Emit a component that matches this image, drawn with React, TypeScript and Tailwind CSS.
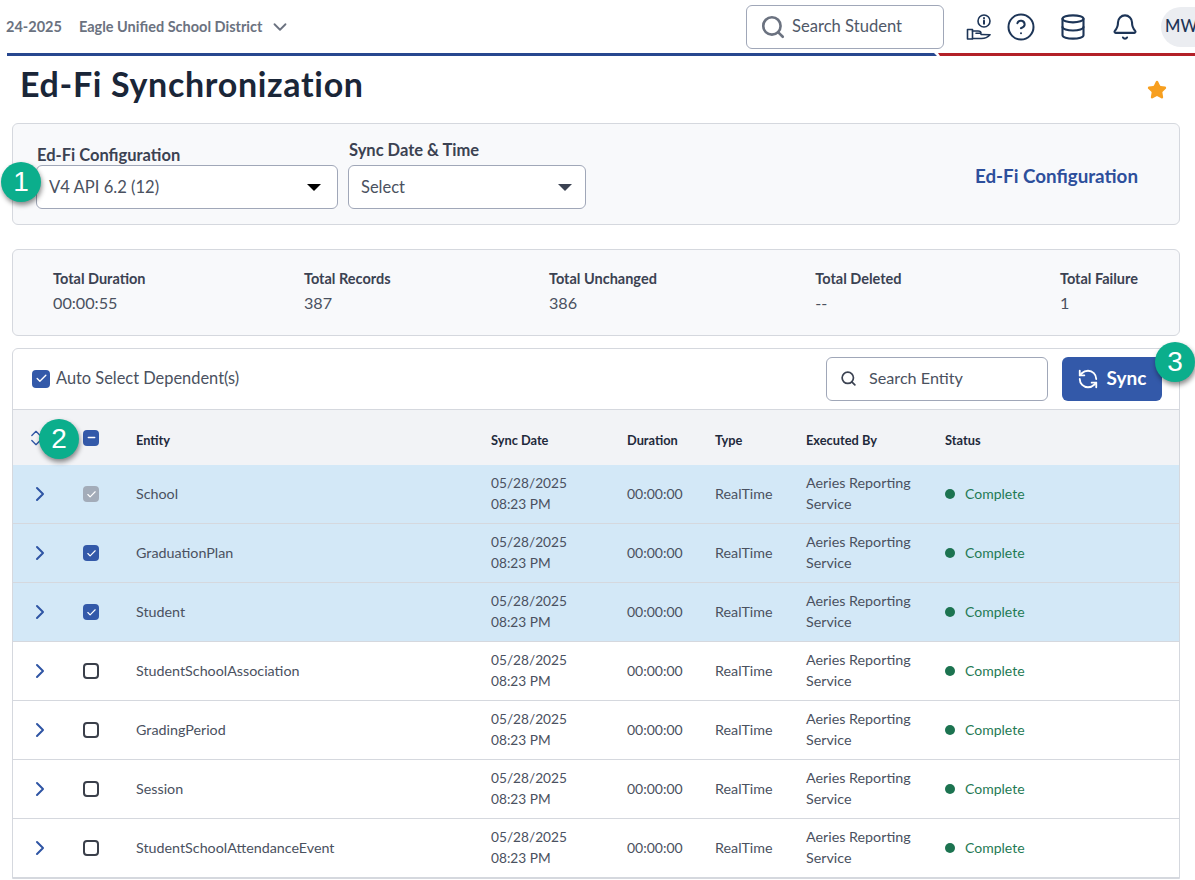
import { Bell, ChevronDown, ChevronRight, ChevronsUpDown, CircleHelp, Database, RefreshCcw, Search, Star, Check, Minus } from 'lucide-react';

const rows = [
  { name: 'School', state: 'locked' },
  { name: 'GraduationPlan', state: 'checked' },
  { name: 'Student', state: 'checked' },
  { name: 'StudentSchoolAssociation', state: 'none' },
  { name: 'GradingPeriod', state: 'none' },
  { name: 'Session', state: 'none' },
  { name: 'StudentSchoolAttendanceEvent', state: 'none' },
];

const totals = [
  { label: 'Total Duration', value: '00:00:55' },
  { label: 'Total Records', value: '387' },
  { label: 'Total Unchanged', value: '386' },
  { label: 'Total Deleted', value: '--' },
  { label: 'Total Failure', value: '1' },
];

function StepBadge({ n, className }: { n: number; className: string }) {
  return (
    <div
      className={`absolute flex h-10 w-10 items-center justify-center rounded-full bg-[#0bae8c] text-[28px] leading-none text-white shadow-[1px_3px_5px_rgba(0,0,0,0.45)] ${className}`}
      style={{ fontFamily: '"Liberation Sans", sans-serif' }}
    >
      {n}
    </div>
  );
}

function HandInfoIcon() {
  return (
    <svg width="26" height="28" viewBox="0 0 26 28" fill="none" stroke="#1d3557" strokeWidth="1.6" strokeLinecap="round" strokeLinejoin="round">
      <circle cx="18" cy="8" r="6" />
      <path d="M18 7.500v3.200" strokeWidth="2" />
      <path d="M18 5v.2" strokeWidth="2" />
      <rect x="1.500" y="16.500" width="5" height="9.500" />
      <path d="M6.500 18h5.500c1.500 0 3 .8 3 2.200h-5" />
      <path d="M6.500 25.500h9c3 0 6.500-1.500 8.500-3.800l-9-.2" />
    </svg>
  );
}

function Checkbox({ state }: { state: string }) {
  if (state === 'none') {
    return <div className="h-4 w-4 rounded-[4px] border-2 border-[#3a3f4a] bg-white" />;
  }
  return (
    <div className={`flex h-4 w-4 items-center justify-center rounded-[4px] ${state === 'locked' ? 'bg-[#a3acb9]' : 'bg-[#3359a9]'}`}>
      {state === 'minus' ? <Minus size={11} strokeWidth={3} color="white" /> : <Check size={11} strokeWidth={2.5} color="white" />}
    </div>
  );
}

function Row({ name, state }: { name: string; state: string }) {
  const selected = state !== 'none';
  return (
    <div className={`flex h-[59px] items-center border-b border-[#d5d8de] pl-[15px] text-[14.3px] text-[#4a5160] ${selected ? 'bg-[#d3e8f7]' : 'bg-white'}`}>
      <div className="w-[55px]">
        <ChevronRight size={24} strokeWidth={2} color="#2f55a4" />
      </div>
      <div className="w-[53px]">
        <Checkbox state={state} />
      </div>
      <div className="w-[355px]">{name}</div>
      <div className="w-[136px] pb-[2px] text-[13.7px] leading-[21px]">
        05/28/2025
        <br />
        08:23 PM
      </div>
      <div className="w-[88px] pb-[2px] text-[14px]">00:00:00</div>
      <div className="w-[91px]">RealTime</div>
      <div className="w-[139px] pb-[2px] leading-[21px]">
        Aeries Reporting
        <br />
        Service
      </div>
      <div className="flex items-center gap-[10px] text-[14px] text-[#1f7a54]">
        <span className="h-[10px] w-[10px] rounded-full bg-[#1c7350]" />
        <span className="-mt-[2px]">Complete</span>
      </div>
    </div>
  );
}

export default function App() {
  return (
    <div className="h-[880px] w-[1195px] overflow-hidden bg-white text-[#1f2a3c]" style={{ fontFamily: 'Lato, "Noto Sans", sans-serif' }}>
      <header className="flex h-[53px] items-center pl-[6px]">
        <span className="text-[14.5px] font-bold text-[#6b7280]">24-2025</span>
        <span className="ml-[17px] text-[14.5px] font-bold text-[#6b7280]">Eagle Unified School District</span>
        <ChevronDown size={22} className="ml-[7px] text-[#6b7280]" />
        <div className="ml-auto flex h-[44px] w-[198px] items-center gap-[6px] rounded-md border border-[#a0a7b8] pl-[13px] text-[16.6px] text-[#505868]">
          <Search size={26} strokeWidth={2.4} color="#6b7280" />
          Search Student
        </div>
        <div className="ml-[22px]">
          <HandInfoIcon />
        </div>
        <CircleHelp size={30} strokeWidth={1.6} color="#1d3557" className="ml-[14px]" />
        <Database size={28} strokeWidth={1.8} color="#1d3557" className="ml-[23px]" />
        <Bell size={28} strokeWidth={1.8} color="#1d3557" className="ml-[24px]" />
        <div className="ml-[22px] flex h-10 w-[34px] shrink-0 items-center overflow-hidden rounded-l-full bg-[#ebedf1] pl-[4px] text-[16.5px] font-medium text-[#1d3557]">MW</div>
      </header>
      <div className="flex h-[3px] pl-[7px]">
        <div className="w-[930px] bg-[#27478f] [clip-path:polygon(0_0,calc(100%-3px)_0,100%_100%,0_100%)]" />
        <div className="ml-[1px] flex-1 bg-[#b32028] [clip-path:polygon(0_0,100%_0,100%_100%,2px_100%)]" />
      </div>
      <div className="flex h-[67px] items-center justify-between pb-3 pl-[20px] pr-[28px]">
        <h1 className="text-[34px] font-bold leading-none tracking-[0.67px] text-[#1a2638]">Ed-Fi Synchronization</h1>
        <Star size={20} fill="#f79f1f" color="#f79f1f" className="mt-3" />
      </div>
      <section className="relative mx-3 flex h-[102px] w-[1168px] items-start rounded-md border border-[#d5d8de] bg-[#f8f9fb] pl-[23px] pr-[41px]">
        <StepBadge n={1} className="-left-[12px] top-[38px]" />
        <div className="mt-[21px] w-[312px]">
          <div className="pl-px text-[16.5px] font-bold leading-5 text-[#3b4252]">Ed-Fi Configuration</div>
          <div className="flex h-[44px] w-[302px] items-center justify-between rounded-md border border-[#a0a7b8] bg-white pl-3 pr-4 text-[16.6px] text-[#4a5160]">
            V4 API 6.2 (12)
            <span className="h-0 w-0 border-x-[7px] border-t-[7px] border-x-transparent border-t-black" />
          </div>
        </div>
        <div className="mt-[16px] w-[238px]">
          <div className="pl-px text-[16.5px] font-bold leading-5 text-[#3b4252]">Sync Date &amp; Time</div>
          <div className="mt-[5px] flex h-[44px] w-[238px] items-center justify-between rounded-md border border-[#a0a7b8] bg-white pl-3 pr-[13px] text-[16.5px] text-[#4a5160]">
            Select
            <span className="h-0 w-0 border-x-[7px] border-t-[7px] border-x-transparent border-t-[#3b4252]" />
          </div>
        </div>
        <a className="ml-auto mt-[38px] text-[18.8px] font-bold text-[#2d4f9c]">Ed-Fi Configuration</a>
      </section>
      <section className="mx-3 mt-6 flex h-[87px] w-[1168px] items-center justify-between rounded-md border border-[#d5d8de] bg-[#f8f9fb] pb-px pl-10 pr-[41px]">
        {totals.map((t) => (
          <div key={t.label}>
            <div className="text-[14.5px] font-bold text-[#3b4252]">{t.label}</div>
            <div className="mt-px text-[16.2px] text-[#4a5160]">{t.value}</div>
          </div>
        ))}
      </section>
      <section className="relative mx-3 mt-3 w-[1168px] rounded-t-md border border-[#d5d8de]">
        <StepBadge n={2} className="left-[26px] top-[70px]" />
        <StepBadge n={3} className="left-[1142px] -top-[7px]" />
        <div className="flex h-[61px] items-center border-b border-[#d5d8de] pb-px pl-[19px] pr-[17px]">
          <div className="flex h-[18px] w-[18px] items-center justify-center rounded-[4px] bg-[#3359a9]">
            <Check size={13} strokeWidth={2.5} color="white" />
          </div>
          <span className="ml-[6px] text-[16.4px] text-[#4a5160]">Auto Select Dependent(s)</span>
          <div className="ml-auto flex h-[44px] w-[222px] items-center gap-[12px] rounded-md border border-[#a0a7b8] pl-[13px] text-[16.2px] text-[#4a5160]">
            <Search size={17} strokeWidth={2.4} color="#3b4252" />
            Search Entity
          </div>
          <button className="ml-[14px] flex h-[44px] w-[100px] items-center justify-center gap-[8px] rounded-md bg-[#3359a9] pr-[1px] text-[19px] font-bold text-white">
            <RefreshCcw size={22} strokeWidth={2} />
            Sync
          </button>
        </div>
        <div className="flex h-[55px] items-center bg-[#f2f3f6] pl-[13px] text-[12.8px] font-bold text-[#1f2a3c]">
          <div className="w-[57px]">
            <ChevronsUpDown size={20} strokeWidth={1.6} color="#2f55a4" />
          </div>
          <div className="w-[53px]">
            <Checkbox state="minus" />
          </div>
          <div className="w-[355px] pt-[6px]">Entity</div>
          <div className="w-[136px] pt-[6px]">Sync Date</div>
          <div className="w-[88px] pt-[6px]">Duration</div>
          <div className="w-[91px] pt-[6px]">Type</div>
          <div className="w-[139px] pt-[6px]">Executed By</div>
          <div className="pt-[6px]">Status</div>
        </div>
        {rows.map((r) => (
          <Row key={r.name} name={r.name} state={r.state} />
        ))}
      </section>
    </div>
  );
}
